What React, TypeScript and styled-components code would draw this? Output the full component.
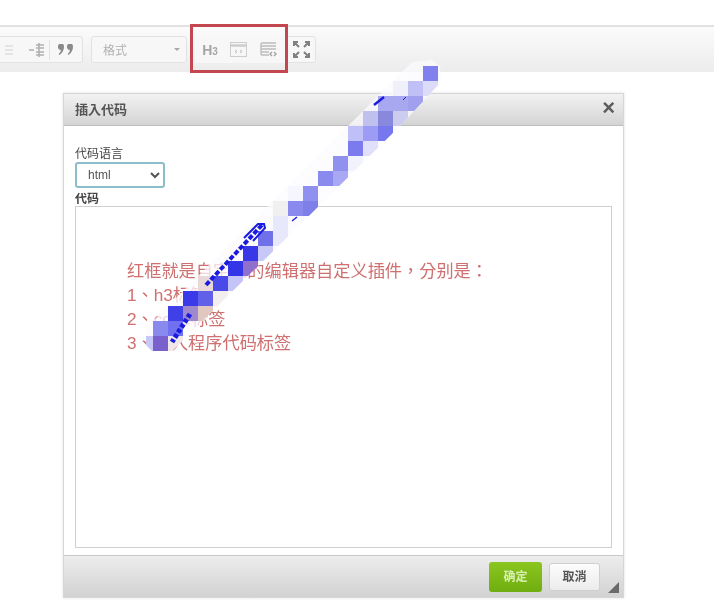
import styled, {createGlobalStyle} from 'styled-components'

const GlobalStyle = createGlobalStyle`
    html, body {
        margin: 0;
        padding: 0;
        background: #fff;
    }
`

const mosaicCells: [number, number, string][] = [
    [423, 66, '#8080ee'],
    [393, 81, '#f0f0fa'], [408, 81, '#c0c0f6'], [423, 81, '#dcdcf8'],
    [378, 96, '#a8a8f0'], [393, 96, '#a8a8f0'], [408, 96, '#a0a0ee'],
    [363, 111, '#c0c0ee'], [378, 111, '#8888dd'], [393, 111, '#ccccee'],
    [348, 126, '#c0c0f8'], [363, 126, '#9c9cf4'], [378, 126, '#7777ee'],
    [348, 141, '#7b7bee'], [363, 141, '#e0e0fa'],
    [333, 156, '#9090ee'], [348, 156, '#f2f2fd'],
    [318, 171, '#8a8aee'], [333, 171, '#a8a8f4'],
    [288, 186, '#f6f6fe'], [303, 186, '#9090f0'],
    [273, 201, '#f0f0f0'], [288, 201, '#8a8aee'], [303, 201, '#7f7fea'],
    [273, 216, '#e8e8fc'],
    [258, 231, '#7070e8'], [273, 231, '#e8e8fc'],
    [243, 246, '#3838e8'], [258, 246, '#c8c8f8'],
    [228, 261, '#3535e8'], [243, 261, '#9070cc'],
    [198, 276, '#e8d8d8'], [213, 276, '#4a4ae8'], [228, 276, '#c4c4f8'],
    [183, 291, '#3a3ae8'], [198, 291, '#6060e8'], [213, 291, '#f5eeee'],
    [168, 306, '#4040e8'], [183, 306, '#a088cc'], [198, 306, '#e0c8c0'],
    [153, 321, '#8a8aee'], [168, 321, '#7070f0'],
    [138, 336, '#c8c8f8'], [153, 336, '#7a60cc'], [168, 336, '#f0e8e8']
]

const bandPoints = '412,62 432,60 440,66 441,82 402,124 172,351 152,351 146,345 146,328'

export default function App() {
    return (
        <>
            <GlobalStyle/>
            <Page>
                <Toolbar>
                    <ToolGroup $width={83}>
                        <ToolIcon $width={24}>
                            <svg width="14" height="14" viewBox="0 0 14 14" fill="none" stroke="#dedede" strokeWidth="1.6">
                                <path d="M0 3h8M0 7h8M0 11h8"/>
                            </svg>
                        </ToolIcon>
                        <ToolIcon $width={26}>
                            <svg width="16" height="14" viewBox="0 0 16 14" fill="none" stroke="#b0b0b0" strokeWidth="1.6">
                                <path d="M7 2h8M7 5h8M7 9h8M7 12h8M0 7h5M10 0v14"/>
                            </svg>
                        </ToolIcon>
                        <ToolSep/>
                        <ToolIcon $width={32}>
                            <svg width="16" height="12" viewBox="0 0 16 12" fill="#8a8a8a">
                                <path d="M0 2.500a3 3 0 1 1 6 0c0 3.500-1.500 6.500-4.500 8.500l-.8-1c1.300-1.200 2-2.400 2.200-4A3 3 0 0 1 0 2.500zM9 2.500a3 3 0 1 1 6 0c0 3.500-1.500 6.500-4.500 8.500l-.8-1c1.300-1.200 2-2.400 2.200-4A3 3 0 0 1 9 2.500z"/>
                            </svg>
                        </ToolIcon>
                    </ToolGroup>
                    <FormatCombo>
                        <span>格式</span>
                        <ComboCaret/>
                    </FormatCombo>
                    <PluginGroup>
                        <HeadingIcon>H<small>3</small></HeadingIcon>
                        <ToolIcon $width={30}>
                            <svg width="17" height="15" viewBox="0 0 17 15" fill="none" stroke="#cdcdcd">
                                <rect x="0.500" y="0.500" width="16" height="14"/>
                                <path d="M0 3.500h17" strokeWidth="2.500"/>
                                <path d="M7 8l-2 1.500L7 11M10 8l2 1.500L10 11" stroke="#bbb"/>
                            </svg>
                        </ToolIcon>
                        <ToolIcon $width={30}>
                            <svg width="17" height="16" viewBox="0 0 17 16" fill="none" stroke="#bdbdbd" strokeWidth="1.400">
                                <path d="M1 1h15M1 4h15M1 7h15M1 10h8M1 13h8M1 1v12"/>
                                <path d="M12 10l-2 2 2 2M14 10l2 2-2 2" stroke="#a4a4a4"/>
                            </svg>
                        </ToolIcon>
                    </PluginGroup>
                    <FullscreenButton>
                        <svg width="17" height="17" viewBox="0 0 17 17" fill="none" stroke="#808080" strokeWidth="2">
                            <path d="M1 5V1h4M12 1h4v4M16 12v4h-4M5 16H1v-4M2 2l4 4M15 2l-4 4M15 15l-4-4M2 15l4-4"/>
                        </svg>
                    </FullscreenButton>
                    <RedFrame/>
                </Toolbar>

                <Dialog>
                    <DialogHeader>
                        <DialogTitle>插入代码</DialogTitle>
                        <CloseMark>×</CloseMark>
                    </DialogHeader>
                    <DialogBody>
                        <FieldLabel>代码语言</FieldLabel>
                        <LanguageSelect defaultValue="html">
                            <option value="html">html</option>
                        </LanguageSelect>
                        <FieldLabel $strong>代码</FieldLabel>
                        <CodeArea
                            readOnly
                            defaultValue={'红框就是自定义的编辑器自定义插件，分别是：\n1、h3标签\n2、code标签\n3、插入程序代码标签'}
                        />
                    </DialogBody>
                    <DialogFooter>
                        <OkButton>确定</OkButton>
                        <CancelButton>取消</CancelButton>
                        <ResizeGrip/>
                    </DialogFooter>
                </Dialog>
            </Page>

            <MosaicOverlay width="714" height="616" viewBox="0 0 714 616">
                <defs>
                    <clipPath id="band">
                        <polygon points={bandPoints}/>
                    </clipPath>
                </defs>
                <polygon points={bandPoints} fill="#fbfbfe" opacity="0.75"/>
                <g clipPath="url(#band)">
                    {mosaicCells.map(([x, y, color]) => (
                        <rect key={`${x}-${y}`} x={x} y={y} width="15" height="15" fill={color}/>
                    ))}
                </g>
                <g fill="none" stroke="#1a1ae0">
                    <path d="M374 105l10-8" strokeWidth="2.500"/>
                    <path d="M403 100l3-3" strokeWidth="1"/>
                    <path d="M292 221l5-4" strokeWidth="1.500"/>
                    <path d="M206 285L262 225" strokeWidth="4" strokeDasharray="5 2"/>
                    <path d="M244 238l14-14 6 0 1 4-12 13" strokeWidth="2"/>
                    <path d="M190 314L172 342" strokeWidth="5" strokeDasharray="4 2"/>
                </g>
            </MosaicOverlay>
        </>
    )
}

const Page = styled.div`
    width: 714px;
    height: 616px;
    padding-top: 25px;
    box-sizing: border-box;
    overflow: hidden;
    background: #fff;
    font-family: "Liberation Sans", "Noto Sans CJK TC", sans-serif;
    filter: blur(0.6px);
`

const Toolbar = styled.div`
    position: relative;
    display: flex;
    align-items: center;
    gap: 8px;
    height: 47px;
    box-sizing: border-box;
    border-top: 2px solid #e2e2e2;
    background: linear-gradient(#fbfbfb, #ececec);
`

const ToolGroup = styled.div<{$width: number}>`
    display: flex;
    align-items: center;
    justify-content: flex-end;
    width: ${p => p.$width}px;
    height: 27px;
    box-sizing: border-box;
    border: 1px solid #e2e2e2;
    border-left: none;
    border-radius: 0 3px 3px 0;
    background: #f7f7f7;
`

const ToolIcon = styled.div<{$width: number}>`
    display: flex;
    align-items: center;
    justify-content: center;
    width: ${p => p.$width}px;
    height: 100%;
`

const ToolSep = styled.div`
    width: 1px;
    height: 20px;
    background: #e2e2e2;
`

const FormatCombo = styled.div`
    display: flex;
    align-items: center;
    justify-content: space-between;
    width: 96px;
    height: 27px;
    padding: 0 6px 0 11px;
    box-sizing: border-box;
    border: 1px solid #e2e2e2;
    border-radius: 3px;
    background: #f7f7f7;
    color: #b0b0b0;
    font-size: 12px;
`

const ComboCaret = styled.i`
    width: 0;
    height: 0;
    border-left: 3px solid transparent;
    border-right: 3px solid transparent;
    border-top: 3px solid #a8a8a8;
`

const PluginGroup = styled.div`
    display: flex;
    align-items: center;
    justify-content: space-between;
    width: 92px;
    height: 27px;
    padding: 0 4px 0 2px;
    box-sizing: border-box;
    background: #f7f7f7;
`

const HeadingIcon = styled.div`
    width: 26px;
    text-align: center;
    color: #a6a6a6;
    font-size: 14px;
    font-weight: 700;

    small {
        font-size: 10px;
    }
`

const FullscreenButton = styled.div`
    display: flex;
    align-items: center;
    justify-content: center;
    width: 29px;
    height: 27px;
    margin-left: -8px;
    box-sizing: border-box;
    border: 1px solid #e2e2e2;
    border-radius: 0 3px 3px 0;
    background: #f7f7f7;
`

const RedFrame = styled.div`
    position: absolute;
    left: 190px;
    top: -3px;
    width: 98px;
    height: 49px;
    box-sizing: border-box;
    border: 3px solid #c2474e;
`

const Dialog = styled.div`
    display: flex;
    flex-direction: column;
    width: 561px;
    height: 505px;
    margin: 21px 0 0 63px;
    box-sizing: border-box;
    border: 1px solid #d6d6d6;
    box-shadow: 0 0 3px rgba(0, 0, 0, 0.12);
    background: #fff;
`

const DialogHeader = styled.div`
    display: flex;
    align-items: center;
    justify-content: space-between;
    height: 32px;
    padding: 0 8px 3px 11px;
    box-sizing: border-box;
    border-bottom: 1px solid #bdbdbd;
    background: linear-gradient(#f2f2f2, #d4d4d4);
`

const DialogTitle = styled.div`
    color: #555;
    font-size: 13px;
    font-weight: 700;
`

const CloseMark = styled.div`
    color: #5c5c5c;
    font-size: 22px;
    font-weight: 700;
    line-height: 1;
`

const DialogBody = styled.div`
    display: flex;
    flex: 1;
    flex-direction: column;
    align-items: flex-start;
    padding: 21px 11px 7px;
    box-sizing: border-box;
`

const FieldLabel = styled.label<{$strong?: boolean}>`
    height: ${p => (p.$strong ? 18 : 15)}px;
    color: #444;
    font-size: 12px;
    font-weight: ${p => (p.$strong ? 700 : 400)};
    line-height: ${p => (p.$strong ? 22 : 15)}px;
`

const LanguageSelect = styled.select`
    width: 90px;
    height: 26px;
    padding-left: 7px;
    box-sizing: border-box;
    border: 2px solid #8dbccb;
    border-radius: 3px;
    outline: none;
    background: #fff;
    color: #555;
    font-family: "Liberation Sans", sans-serif;
    font-size: 12px;
`

const CodeArea = styled.textarea`
    width: 537px;
    flex: 1;
    padding: 52px 51px 0;
    box-sizing: border-box;
    border: 1px solid #cfcfcf;
    outline: none;
    resize: none;
    background: #fff;
    color: #cf6f6f;
    font-family: "Liberation Sans", "Noto Sans CJK TC", sans-serif;
    font-size: 17.2px;
    line-height: 24px;
`

const DialogFooter = styled.div`
    position: relative;
    display: flex;
    align-items: center;
    gap: 7px;
    height: 42px;
    padding-left: 425px;
    box-sizing: border-box;
    border-top: 1px solid #c8c8c8;
    background: linear-gradient(#ededed, #d2d2d2);
`

const OkButton = styled.div`
    width: 53px;
    height: 30px;
    border-radius: 3px;
    background: linear-gradient(#8bc61f, #6fae10);
    color: #d8efb0;
    font-size: 12px;
    font-weight: 700;
    line-height: 30px;
    text-align: center;
`

const CancelButton = styled.div`
    width: 51px;
    height: 28px;
    box-sizing: border-box;
    border: 1px solid #cfcfcf;
    border-radius: 3px;
    background: linear-gradient(#fcfcfc, #ececec);
    color: #555;
    font-size: 12px;
    font-weight: 700;
    line-height: 26px;
    text-align: center;
`

const ResizeGrip = styled.i`
    position: absolute;
    right: 4px;
    bottom: 4px;
    width: 0;
    height: 0;
    border-left: 11px solid transparent;
    border-bottom: 11px solid #6a6a6a;
`

const MosaicOverlay = styled.svg`
    position: absolute;
    left: 0;
    top: 0;
    pointer-events: none;
`
